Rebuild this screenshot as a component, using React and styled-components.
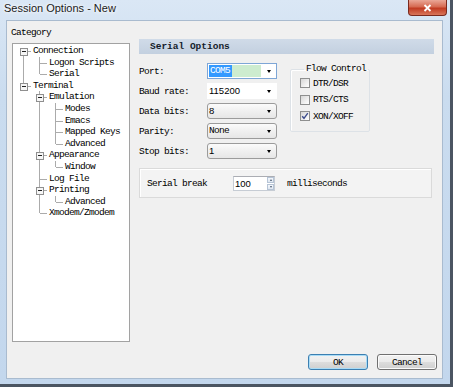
import React from 'react';
import styled, { createGlobalStyle, css } from 'styled-components';

const mono = '"Liberation Mono", "DejaVu Sans Mono", monospace';
const sans = '"Liberation Sans", Arial, sans-serif';

const GlobalStyle = createGlobalStyle`
  html, body {
    margin: 0;
    padding: 0;
    background: #fff;
  }
  body {
    width: 453px;
    height: 387px;
    overflow: hidden;
  }
`;

const Window = styled.div`
  width: 450px;
  height: 384px;
  border-right: 3px solid #4b5562;
  border-bottom: 3px solid #4b5562;
  background: linear-gradient(180deg, #dae7f5 0%, #cadcef 25%, #c3d7ed 100%);
  display: flex;
  flex-direction: column;
`;

const TitleBar = styled.div`
  height: 20px;
  display: flex;
  align-items: flex-start;
  justify-content: space-between;
  padding-left: 4px;
`;

const Title = styled.div`
  font-family: ${sans};
  font-size: 11px;
  line-height: 17px;
  color: #1a1a1a;
  text-shadow: 0 0 5px #fff, 0 0 3px #fff;
`;

const CloseButton = styled.div`
  width: 39px;
  height: 16px;
  margin-right: 3px;
  box-sizing: border-box;
  border: 1px solid #7a2a1e;
  border-top: none;
  border-radius: 0 0 4px 4px;
  background: linear-gradient(180deg, #eaa797 0%, #d66a52 45%, #c13b22 55%, #d8765b 100%);
  display: flex;
  align-items: center;
  justify-content: center;
`;

const Client = styled.div`
  flex: 1;
  margin: 0 7px 5px 6px;
  border: 1px solid #a9bbcf;
  background: #f0f0f0;
  display: flex;
  flex-direction: column;
  font-family: ${mono};
  font-size: 9.5px;
  letter-spacing: -0.7px;
  color: #000;
`;

const Body = styled.div`
  flex: 1;
  display: flex;
`;

const LeftCol = styled.div`
  margin-left: 4px;
  width: 119px;
  display: flex;
  flex-direction: column;
`;

const Caption = styled.div`
  margin-top: 6px;
  height: 12px;
  line-height: 12px;
`;

const Tree = styled.div`
  margin: 4px 0 0 1px;
  width: 118px;
  height: 299px;
  box-sizing: border-box;
  border: 1px solid #a2a2a2;
  background: #fff;
  padding: 1px 0 0 2px;
`;

const TreeRow = styled.div`
  height: 11.6px;
  display: flex;
  align-items: center;
  white-space: nowrap;
`;

const TreeLabel = styled.span`
  margin-left: 2px;
  line-height: 11.6px;
`;

const RightCol = styled.div`
  margin: 18px 0 0 9px;
  width: 295px;
  display: flex;
  flex-direction: column;
`;

const Header = styled.div`
  height: 15px;
  line-height: 15px;
  padding-left: 11px;
  background: linear-gradient(180deg, #d0dbe8 0%, #c3d0e0 100%);
  font-weight: bold;
  letter-spacing: 0;
  color: #141c2a;
`;

const Form = styled.div`
  margin-top: 9px;
  display: flex;
  align-items: flex-start;
`;

const Fields = styled.div`
  display: flex;
  flex-direction: column;
  gap: 4px;
`;

const Field = styled.div`
  height: 16px;
  display: flex;
  align-items: center;
`;

const FieldLabel = styled.span`
  width: 68px;
`;

const comboVariants = {
  focus: css`
    border: 1px solid #7ea6d6;
    background: #fff;
  `,
  flat: css`
    border: 1px solid #fff;
    background: #fff;
  `,
  box: css`
    border: 1px solid #9b9b9b;
    border-radius: 3px;
    background: linear-gradient(180deg, #fbfbfb 0%, #f0f0f0 50%, #e6e6e6 100%);
  `,
};

const Combo = styled.div`
  width: 70px;
  height: 16px;
  box-sizing: border-box;
  display: flex;
  align-items: center;
  padding: 0 5px 0 1px;
  ${(p) => comboVariants[p.$variant]}
`;

const ComboText = styled.span`
  font-family: ${(p) => (p.$sans ? sans : mono)};
  font-size: 9.5px;
  letter-spacing: ${(p) => (p.$sans ? '0' : '-0.7px')};
  line-height: 12px;
`;

const Selected = styled.span`
  background: #3399ff;
  color: #fff;
  padding: 0 2px 0 1px;
  line-height: 12px;
`;

const Tint = styled.span`
  width: 29px;
  height: 12px;
  background: #cdeccf;
`;

const Arrow = styled.span`
  margin-left: auto;
  width: 0;
  height: 0;
  border-left: 2.5px solid transparent;
  border-right: 2.5px solid transparent;
  border-top: 3px solid #000;
`;

const Group = styled.fieldset`
  margin: 0 0 0 13px;
  padding: 2px 0 0 9px;
  width: 80px;
  height: 69px;
  box-sizing: border-box;
  border: 1px solid #dde2e7;
  border-radius: 2px;
  box-shadow: inset 1px 1px 0 #fff;
  display: flex;
  flex-direction: column;
  gap: 4.5px;
`;

const Legend = styled.legend`
  margin-left: 4px;
  padding: 0 2px;
  line-height: 12px;
`;

const CheckRow = styled.div`
  height: 12px;
  display: flex;
  align-items: center;
`;

const Box = styled.span`
  width: 10px;
  height: 10px;
  box-sizing: border-box;
  border: 1px solid #8e8f8f;
  background: linear-gradient(135deg, #d6d6d6 0%, #f4f4f4 70%, #fff 100%);
  display: flex;
  align-items: center;
  justify-content: center;
`;

const CheckLabel = styled.span`
  margin-left: 3px;
`;

const BreakPanel = styled.div`
  margin-top: 9px;
  width: 293px;
  height: 30px;
  box-sizing: border-box;
  border: 1px solid #dadada;
  box-shadow: inset 1px 1px 0 #fff;
  background: #f3f3f3;
  display: flex;
  align-items: center;
  padding-left: 7px;
`;

const BreakLabel = styled.span`
  width: 86px;
`;

const Spin = styled.div`
  width: 42px;
  height: 15px;
  box-sizing: border-box;
  border: 1px solid #c6ccd4;
  border-top-color: #abadb3;
  background: #fff;
  display: flex;
`;

const SpinText = styled.span`
  flex: 1;
  padding-left: 1px;
  font-family: ${sans};
  font-size: 9.5px;
  letter-spacing: 0;
  line-height: 13px;
`;

const SpinButtons = styled.div`
  width: 7px;
  display: flex;
  flex-direction: column;
  gap: 1px;
`;

const SpinButton = styled.span`
  flex: 1;
  border: 1px solid #b6c4d6;
  background: linear-gradient(180deg, #f4f7fb, #dfe7f1);
  display: flex;
  align-items: center;
  justify-content: center;
`;

const Tick = styled.span`
  width: 0;
  height: 0;
  border-left: 1.5px solid transparent;
  border-right: 1.5px solid transparent;
  ${(p) => (p.$up ? 'border-bottom: 2px solid #4a5a70;' : 'border-top: 2px solid #4a5a70;')}
`;

const Unit = styled.span`
  margin-left: 12px;
`;

const Footer = styled.div`
  display: flex;
  justify-content: flex-end;
  gap: 9px;
  padding: 0 5px 8px 0;
`;

const Button = styled.div`
  width: 60px;
  height: 16px;
  box-sizing: border-box;
  border: 1px solid ${(p) => (p.$primary ? '#3c7fb1' : '#707070')};
  border-radius: 3px;
  background: linear-gradient(180deg, #f2f2f2 0%, #ebebeb 48%, #dddddd 52%, #cfcfcf 100%);
  box-shadow: inset 0 0 0 1px ${(p) => (p.$primary ? '#a9dcf7' : '#fbfbfb')};
  display: flex;
  align-items: center;
  justify-content: center;
`;

const tree = [
  { label: 'Connection', level: 0, open: true },
  { label: 'Logon Scripts', level: 1 },
  { label: 'Serial', level: 1 },
  { label: 'Terminal', level: 0, open: true },
  { label: 'Emulation', level: 1, open: true },
  { label: 'Modes', level: 2 },
  { label: 'Emacs', level: 2 },
  { label: 'Mapped Keys', level: 2 },
  { label: 'Advanced', level: 2 },
  { label: 'Appearance', level: 1, open: true },
  { label: 'Window', level: 2 },
  { label: 'Log File', level: 1 },
  { label: 'Printing', level: 1, open: true },
  { label: 'Advanced', level: 2 },
  { label: 'Xmodem/Zmodem', level: 1 },
];

function hasNext(i) {
  const lvl = tree[i].level;
  for (let j = i + 1; j < tree.length; j++) {
    if (tree[j].level < lvl) return false;
    if (tree[j].level === lvl) return true;
  }
  return false;
}

function ancestor(i, lvl) {
  for (let j = i - 1; j >= 0; j--) {
    if (tree[j].level === lvl) return j;
  }
  return -1;
}

const H = 11.6;
const LINE = '#ababab';

function Guides({ index }) {
  const item = tree[index];
  const w = 16 * (item.level + 1);
  const mid = 6;
  const parts = [];
  for (let c = 0; c < item.level; c++) {
    if (hasNext(ancestor(index, c))) {
      parts.push(<line key={'g' + c} x1={16 * c + 8.5} y1={0} x2={16 * c + 8.5} y2={H} />);
    }
  }
  const cx = 16 * item.level + 8.5;
  if (index > 0) parts.push(<line key="up" x1={cx} y1={0} x2={cx} y2={mid} />);
  if (hasNext(index)) parts.push(<line key="down" x1={cx} y1={mid} x2={cx} y2={H} />);
  parts.push(<line key="h" x1={cx} y1={mid + 0.5} x2={w} y2={mid + 0.5} />);
  return (
    <svg width={w} height={H} style={{ flexShrink: 0 }} shapeRendering="crispEdges">
      <g stroke={LINE} strokeWidth="1">{parts}</g>
      {item.open && (
        <g>
          <rect x={cx - 3.5} y={mid - 3} width="7" height="7" fill="#f6f6f6" stroke="#8f8f8f" />
          <line x1={cx - 1.5} y1={mid + 0.5} x2={cx + 2.5} y2={mid + 0.5} stroke="#222" />
        </g>
      )}
    </svg>
  );
}

function Check({ checked, children }) {
  return (
    <CheckRow>
      <Box>
        {checked && (
          <svg width="8" height="8" viewBox="0 0 8 8">
            <path d="M1.2 4.2 L3 6.3 L6.8 1.2" fill="none" stroke="#3c4c8c" strokeWidth="1.4" />
          </svg>
        )}
      </Box>
      <CheckLabel>{children}</CheckLabel>
    </CheckRow>
  );
}

export default function App() {
  return (
    <>
      <GlobalStyle />
      <Window>
        <TitleBar>
          <Title>Session Options - New</Title>
          <CloseButton>
            <svg width="9" height="8" viewBox="0 0 9 8">
              <path d="M1.5 1 L7.5 7 M7.5 1 L1.5 7" stroke="#fff" strokeWidth="1.8" />
            </svg>
          </CloseButton>
        </TitleBar>
        <Client>
          <Body>
            <LeftCol>
              <Caption>Category</Caption>
              <Tree>
                {tree.map((item, i) => (
                  <TreeRow key={i}>
                    <Guides index={i} />
                    <TreeLabel>{item.label}</TreeLabel>
                  </TreeRow>
                ))}
              </Tree>
            </LeftCol>
            <RightCol>
              <Header>Serial Options</Header>
              <Form>
                <Fields>
                  <Field>
                    <FieldLabel>Port:</FieldLabel>
                    <Combo $variant="focus">
                      <Selected>COM5</Selected>
                      <Tint />
                      <Arrow />
                    </Combo>
                  </Field>
                  <Field>
                    <FieldLabel>Baud rate:</FieldLabel>
                    <Combo $variant="flat">
                      <ComboText $sans>115200</ComboText>
                      <Arrow />
                    </Combo>
                  </Field>
                  <Field>
                    <FieldLabel>Data bits:</FieldLabel>
                    <Combo $variant="box">
                      <ComboText $sans>8</ComboText>
                      <Arrow />
                    </Combo>
                  </Field>
                  <Field>
                    <FieldLabel>Parity:</FieldLabel>
                    <Combo $variant="box">
                      <ComboText>None</ComboText>
                      <Arrow />
                    </Combo>
                  </Field>
                  <Field>
                    <FieldLabel>Stop bits:</FieldLabel>
                    <Combo $variant="box">
                      <ComboText $sans>1</ComboText>
                      <Arrow />
                    </Combo>
                  </Field>
                </Fields>
                <Group>
                  <Legend>Flow Control</Legend>
                  <Check>DTR/DSR</Check>
                  <Check>RTS/CTS</Check>
                  <Check checked>XON/XOFF</Check>
                </Group>
              </Form>
              <BreakPanel>
                <BreakLabel>Serial break</BreakLabel>
                <Spin>
                  <SpinText>100</SpinText>
                  <SpinButtons>
                    <SpinButton><Tick $up /></SpinButton>
                    <SpinButton><Tick /></SpinButton>
                  </SpinButtons>
                </Spin>
                <Unit>milliseconds</Unit>
              </BreakPanel>
            </RightCol>
          </Body>
          <Footer>
            <Button $primary>OK</Button>
            <Button>Cancel</Button>
          </Footer>
        </Client>
      </Window>
    </>
  );
}
